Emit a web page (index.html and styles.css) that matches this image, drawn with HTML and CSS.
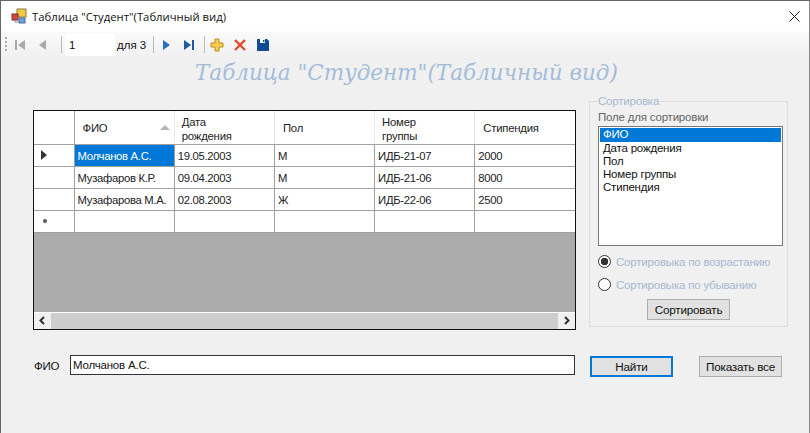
FILE: index.html
```html
<!DOCTYPE html>
<html lang="ru">
<head>
    <meta charset="UTF-8">
    <title>Таблица "Студент"(Табличный вид)</title>
    <link rel="stylesheet" href="styles.css">
</head>
<body>
    <div class="window">
        <div class="titlebar">
            <svg class="app-icon" width="16" height="16" viewBox="0 0 16 16">
                <rect x="6" y="1" width="9" height="8" fill="#f5c842" stroke="#8a7a40"/>
                <rect x="1" y="6" width="6" height="6" fill="#d8453a" stroke="#7a3030"/>
                <rect x="8" y="10" width="6" height="5" fill="#6c9ee0" stroke="#4a6a9a"/>
                <path d="M7 9v2M4 12v2h3" stroke="#888" fill="none"/>
            </svg>
            <span class="title-text">Таблица "Студент"(Табличный вид)</span>
            <svg class="close-icon" width="11" height="11" viewBox="0 0 11 11">
                <path d="M0.5 0.5l10 10M10.5 0.5l-10 10" stroke="#222" fill="none"/>
            </svg>
        </div>

        <div class="toolbar">
            <span class="grip"></span>
            <svg class="tool" width="16" height="16" viewBox="0 0 16 16"><path d="M3 3h2v10H3zM13 3v10L6 8z" fill="#a9a9a9"/></svg>
            <svg class="tool wide" width="16" height="16" viewBox="0 0 16 16"><path d="M11 3v10L4 8z" fill="#a9a9a9"/></svg>
            <span class="sep"></span>
            <span class="position">1</span>
            <span class="count">для 3</span>
            <span class="sep"></span>
            <svg class="tool" width="16" height="16" viewBox="0 0 16 16"><path d="M5 3v10l7-5z" fill="#2b6cc4"/></svg>
            <svg class="tool" width="16" height="16" viewBox="0 0 16 16"><path d="M3 3v10l7-5zM11 3h2v10h-2z" fill="#1f5aa8"/></svg>
            <span class="sep"></span>
            <svg class="tool" width="16" height="16" viewBox="0 0 16 16"><path d="M6 2h4v4h4v4h-4v4H6v-4H2V6h4z" fill="#f6d04d" stroke="#c08a20"/></svg>
            <svg class="tool" width="16" height="16" viewBox="0 0 16 16"><path d="M3 3l10 10M13 3L3 13" stroke="#e2472a" stroke-width="2.4" fill="none"/></svg>
            <svg class="tool" width="16" height="16" viewBox="0 0 16 16"><path d="M2 2h10l2 2v10H2z" fill="#0f4c94"/><path d="M5 2h5v4H5z" fill="#fff"/><path d="M8 3h1.500v2H8z" fill="#0f4c94"/><path d="M4 10h8v4H4z" fill="#0f4c94"/></svg>
        </div>

        <div class="heading">Таблица "Студент"(Табличный вид)</div>

        <div class="content">
            <div class="grid">
                <table class="students">
                    <thead>
                        <tr>
                            <th class="row-head"></th>
                            <th class="sorted">ФИО<span class="sort-mark"></span></th>
                            <th class="wrapped">Дата<br>рождения</th>
                            <th>Пол</th>
                            <th class="wrapped">Номер<br>группы</th>
                            <th>Стипендия</th>
                        </tr>
                    </thead>
                    <tbody>
                        <tr>
                            <td class="row-head"><span class="current-mark"></span></td>
                            <td class="selected">Молчанов А.С.</td>
                            <td>19.05.2003</td>
                            <td>М</td>
                            <td>ИДБ-21-07</td>
                            <td>2000</td>
                        </tr>
                        <tr>
                            <td class="row-head"></td>
                            <td>Музафаров К.Р.</td>
                            <td>09.04.2003</td>
                            <td>М</td>
                            <td>ИДБ-21-06</td>
                            <td>8000</td>
                        </tr>
                        <tr>
                            <td class="row-head"></td>
                            <td>Музафарова М.А.</td>
                            <td>02.08.2003</td>
                            <td>Ж</td>
                            <td>ИДБ-22-06</td>
                            <td>2500</td>
                        </tr>
                        <tr>
                            <td class="row-head"><span class="new-mark"></span></td>
                            <td></td>
                            <td></td>
                            <td></td>
                            <td></td>
                            <td></td>
                        </tr>
                    </tbody>
                </table>
                <div class="grid-empty"></div>
                <div class="hscroll">
                    <svg class="arrow" width="17" height="15" viewBox="0 0 17 15"><path d="M10 4L6.500 7.500 10 11" stroke="#333" stroke-width="2" fill="none"/></svg>
                    <div class="thumb"></div>
                    <svg class="arrow" width="17" height="15" viewBox="0 0 17 15"><path d="M7 4l3.500 3.500L7 11" stroke="#333" stroke-width="2" fill="none"/></svg>
                </div>
            </div>

            <fieldset class="sort-panel">
                <legend>Сортировка</legend>
                <div class="field-label">Поле для сортировки</div>
                <div class="listbox">
                    <div class="item active">ФИО</div>
                    <div class="item">Дата рождения</div>
                    <div class="item">Пол</div>
                    <div class="item">Номер группы</div>
                    <div class="item">Стипендия</div>
                </div>
                <div class="radio checked"><span class="dot"></span>Сортировыка по возрастанию</div>
                <div class="radio"><span class="dot"></span>Сортировыка по убыванию</div>
                <div class="sort-action"><button class="btn">Сортировать</button></div>
            </fieldset>
        </div>

        <div class="search">
            <span class="search-label">ФИО</span>
            <div class="search-input">Молчанов А.С.</div>
            <button class="btn primary">Найти</button>
            <button class="btn">Показать все</button>
        </div>
    </div>
</body>
</html>
```

FILE: styles.css
```css
html, body {
    margin: 0;
    height: 100%;
}

body {
    font-family: "Liberation Sans", Arial, sans-serif;
    font-size: 11px;
    color: #111;
    background-color: #f0f0f0;
    overflow: hidden;
}

.window {
    height: 433px;
    box-sizing: border-box;
    border-top: 1px solid #666;
    border-left: 1px solid #666;
    border-right: 1px solid #888;
    background-color: #f0f0f0;
}

.titlebar {
    display: flex;
    align-items: center;
    height: 30px;
    padding-left: 10px;
    background-color: #fff;
}

.app-icon {
    margin-right: 5px;
}

.title-text {
    font-family: "Open Sans", sans-serif;
    font-size: 11.300px;
    color: #111;
}

.close-icon {
    margin-left: auto;
    margin-right: 9px;
}

.toolbar {
    display: flex;
    align-items: center;
    height: 27px;
    padding-left: 4px;
    font-size: 11.500px;
    background: linear-gradient(#fafafa, #f0f0f0);
}

.grip {
    width: 2px;
    height: 16px;
    margin-right: 5px;
    background: repeating-linear-gradient(#aaa 0, #aaa 2px, transparent 2px, transparent 4px);
}

.tool {
    margin-right: 7px;
}

.tool.wide {
    margin-right: 10px;
}

.sep {
    width: 1px;
    height: 17px;
    margin-right: 3px;
    background-color: #bbb;
}

.position {
    width: 50px;
    height: 22px;
    line-height: 22px;
    padding-left: 4px;
    box-sizing: border-box;
    background-color: #fff;
}

.count {
    width: 36px;
    margin-left: 2px;
}

.toolbar .sep + .tool {
    margin-left: 1px;
}

.heading {
    height: 38px;
    padding-left: 194px;
    font-family: "DejaVu Serif", serif;
    font-style: italic;
    font-size: 21.500px;
    line-height: 30px;
    color: #a3bcda;
    white-space: nowrap;
}

.content {
    display: flex;
    align-items: flex-start;
    padding-left: 32px;
    height: 256px;
}

.grid {
    width: 541px;
    height: 218px;
    margin-top: 14px;
    border: 1px solid #111;
    display: flex;
    flex-direction: column;
    background-color: #ababab;
}

.students {
    border-collapse: collapse;
    table-layout: fixed;
    width: 541px;
    background-color: #fff;
}

.students th {
    height: 33px;
    padding: 2px 0 0 8px;
    box-sizing: border-box;
    width: 100px;
    font-weight: normal;
    font-size: 11.300px;
    letter-spacing: -0.200px;
    text-align: left;
    border-right: 1px solid #e6e6e6;
    border-bottom: 1px solid #a0a0a0;
    position: relative;
    line-height: 14px;
    color: #222;
}

.students th:last-child,
.students td:last-child {
    border-right: none;
}

.students th.row-head {
    width: 40px;
    padding: 0;
    border-right: 1px solid #a0a0a0;
}

.students th.wrapped {
    padding: 3px 0 0 7px;
}

.students td {
    height: 22px;
    padding: 1px 0 0 3px;
    box-sizing: border-box;
    border-right: 1px solid #a0a0a0;
    border-bottom: 1px solid #a0a0a0;
    white-space: nowrap;
    font-size: 11.300px;
    letter-spacing: -0.300px;
    color: #222;
}

.students td.row-head {
    padding: 0;
    border-right: 1px solid #a0a0a0;
}

.students td.selected {
    background-color: #0078d7;
    color: #fff;
}

.sort-mark {
    position: absolute;
    right: 4px;
    top: 14px;
    border-left: 5px solid transparent;
    border-right: 5px solid transparent;
    border-bottom: 5px solid #b4b4b4;
}

.current-mark {
    display: block;
    width: 0;
    margin-left: 7px;
    border-top: 5px solid transparent;
    border-bottom: 5px solid transparent;
    border-left: 6px solid #333;
}

.new-mark {
    display: block;
    width: 4px;
    height: 4px;
    margin-left: 9px;
    border-radius: 50%;
    background-color: #555;
}

.grid-empty {
    flex: 1;
}

.hscroll {
    display: flex;
    height: 16px;
    border-top: 1px solid #fff;
    background-color: #f0f0f0;
}

.arrow {
    flex: none;
}

.thumb {
    flex: 1;
    background-color: #cdcdcd;
}

.sort-panel {
    width: 199px;
    height: 232px;
    margin: -1px 0 0 13px;
    padding: 0 0 0 8px;
    box-sizing: border-box;
    border: 1px solid #dcdcdc;
    min-inline-size: 0;
    font-size: 11.500px;
    letter-spacing: -0.200px;
}

.sort-panel legend {
    padding: 0 1px;
    margin-left: -1px;
    color: #a6b8d0;
}

.field-label {
    color: #666;
    line-height: 14px;
    margin-top: 3px;
}

.listbox {
    width: 185px;
    height: 120px;
    margin-top: 2px;
    padding: 1px;
    box-sizing: border-box;
    border: 1px solid #777;
    background-color: #fff;
    line-height: 13px;
    color: #111;
}

.item {
    padding-left: 3px;
}

.item.active {
    background-color: #0078d7;
    color: #fff;
    height: 14px;
}

.radio {
    display: flex;
    align-items: center;
    height: 23px;
    color: #a6b8d0;
}

.radio.checked {
    margin-top: 4px;
}

.dot {
    width: 11px;
    height: 11px;
    margin-right: 5px;
    border: 1px solid #333;
    border-radius: 50%;
    background-color: #fff;
}

.radio.checked .dot {
    background: radial-gradient(circle, #333 0, #333 3.500px, #fff 4px);
}

.sort-action {
    padding: 3px 0 0 49px;
}

.btn {
    width: 83px;
    height: 21px;
    padding: 0;
    border: 1px solid #adadad;
    background-color: #e1e1e1;
    font-family: "Liberation Sans", Arial, sans-serif;
    font-size: 11.700px;
    letter-spacing: -0.200px;
    color: #111;
}

.btn.primary {
    border: 2px solid #0078d7;
}

.search {
    display: flex;
    align-items: flex-start;
    padding-left: 33px;
    height: 22px;
    margin-top: 4px;
    font-size: 11.500px;
    letter-spacing: -0.200px;
}

.search-label {
    width: 36px;
    line-height: 21px;
}

.search-input {
    width: 505px;
    height: 20px;
    line-height: 18px;
    margin-top: -1px;
    padding-left: 2px;
    box-sizing: border-box;
    border: 1px solid #333;
    background-color: #fff;
    margin-right: 15px;
}

.search .btn + .btn {
    margin-left: 26px;
}
```
